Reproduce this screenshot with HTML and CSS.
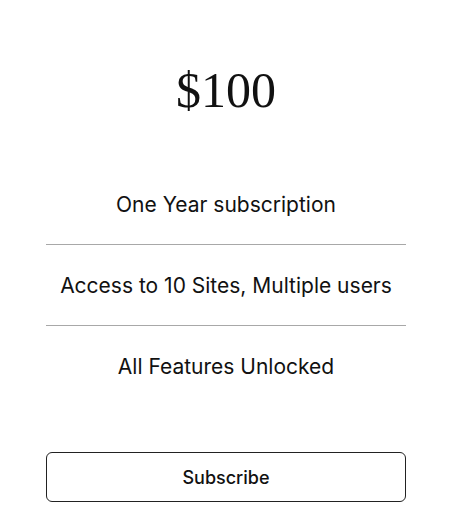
FILE: index.html
```html
<!DOCTYPE html>
<html lang="en">
<head>
    <meta charset="UTF-8">
    <meta name="viewport" content="width=device-width, initial-scale=1.0">
    <title>Pricing</title>
    <link rel="stylesheet" href="styles.css">
</head>
<body>
    <div class="pricing">
        <div class="price">$100</div>

        <ul class="features">
            <li class="feature">One Year subscription</li>
            <li class="feature">Access to 10 Sites, Multiple users</li>
            <li class="feature">All Features Unlocked</li>
        </ul>

        <button class="subscribe-btn">Subscribe</button>
    </div>
</body>
</html>
```

FILE: styles.css
```css
:root {
    --text: #111111;
    --line: #a8a8a8;
    --border: #222222;
}

* {
    margin: 0;
    padding: 0;
    box-sizing: border-box;
}

body {
    background-color: white;
    color: var(--text);
    font-family: 'Inter', 'Noto Sans', sans-serif;
}

.pricing {
    width: 360px;
    margin-left: 46px;
    padding-top: 61px;
    display: flex;
    flex-direction: column;
}

.price {
    font-family: 'Liberation Serif', 'Times New Roman', serif;
    font-size: 50px;
    text-align: center;
    margin-bottom: 45px;
}

.features {
    list-style: none;
}

.feature {
    font-size: 21px;
    line-height: 24px;
    padding: 29px 0 27px;
    text-align: center;
    border-bottom: 1px solid var(--line);
}

.feature:last-child {
    border-bottom: none;
}

.subscribe-btn {
    margin-top: 46px;
    height: 50px;
    background: white;
    border: 1px solid var(--border);
    border-radius: 6px;
    font-family: 'Inter', 'Noto Sans', sans-serif;
    font-size: 18px;
    font-weight: 500;
    color: var(--text);
    cursor: pointer;
}
```
